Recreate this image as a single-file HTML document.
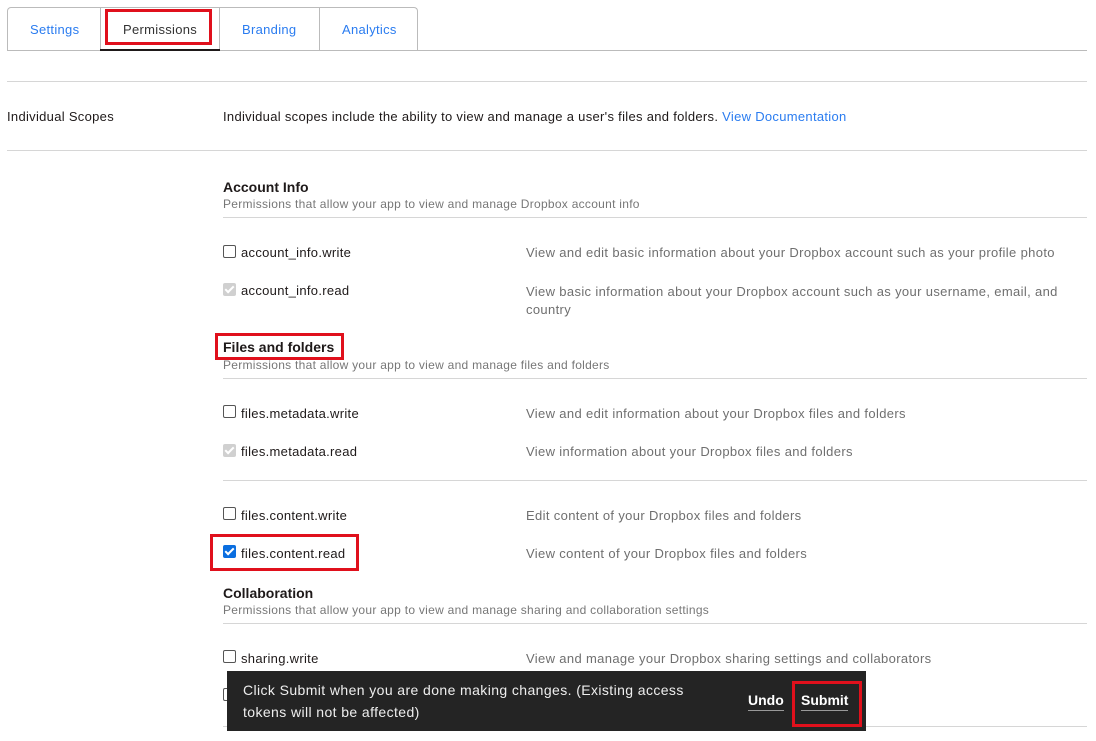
<!DOCTYPE html>
<html><head><style>
body{margin:0;width:1096px;height:741px;background:#fff;font-family:"Liberation Sans",sans-serif;position:relative;overflow:hidden;color:#1e1919}
.a{position:absolute;white-space:nowrap}
.l{position:absolute;height:1px;background:#d6d6d6}
.t{font-size:13px;color:#2a7cf0;letter-spacing:.3px}
.h{font-size:14px;font-weight:bold;color:#1e1919}
.s{font-size:12px;color:#777;letter-spacing:.28px}
.n{font-size:13px;color:#1e1919;letter-spacing:.3px}
.d{font-size:13px;color:#6f6f6f;letter-spacing:.35px}
.cb{position:absolute;width:11px;height:11px;border:1px solid #555;border-radius:2px;background:#fff}
.cg{position:absolute;width:13px;height:13px;border-radius:2px;background:#d0d0d0}
.cg:after,.cc:after{content:"";position:absolute;left:4px;top:1px;width:3px;height:7px;border:solid #fff;border-width:0 2px 2px 0;transform:rotate(45deg)}
.cc{position:absolute;width:13px;height:13px;border-radius:2px;background:#0a6ee0}
.r{position:absolute;border:3px solid #e0101c}
</style></head><body>
<div style="position:absolute;left:7px;top:7px;width:409px;height:43px;border:1px solid #bbb;border-bottom:none;border-radius:4px 4px 0 0"></div>
<div class="l" style="left:7px;top:50px;width:1080px;background:#bbb"></div>
<div style="position:absolute;left:100px;top:7px;width:1px;height:43px;background:#bbb"></div>
<div style="position:absolute;left:219px;top:7px;width:1px;height:43px;background:#bbb"></div>
<div style="position:absolute;left:319px;top:7px;width:1px;height:43px;background:#bbb"></div>
<div style="position:absolute;left:100px;top:49px;width:120px;height:2px;background:#1e1919"></div>
<div class="a t" style="left:30px;top:22px">Settings</div>
<div class="a n" style="left:123px;top:22px;color:#333">Permissions</div>
<div class="a t" style="left:242px;top:22px">Branding</div>
<div class="a t" style="left:342px;top:22px">Analytics</div>
<div class="r" style="left:105px;top:9px;width:101px;height:30px"></div>
<div class="l" style="left:7px;top:81px;width:1080px"></div>
<div class="a n" style="left:7px;top:109px">Individual Scopes</div>
<div class="a n" style="left:223px;top:109px">Individual scopes include the ability to view and manage a user's files and folders. <span style="color:#2a7cf0">View Documentation</span></div>
<div class="l" style="left:7px;top:150px;width:1080px"></div>

<div class="a h" style="left:223px;top:179px">Account Info</div>
<div class="a s" style="left:223px;top:197px">Permissions that allow your app to view and manage Dropbox account info</div>
<div class="l" style="left:223px;top:217px;width:864px"></div>
<div class="cb" style="left:223px;top:245px"></div><div class="a n" style="left:241px;top:245px">account_info.write</div>
<div class="a d" style="left:526px;top:245px">View and edit basic information about your Dropbox account such as your profile photo</div>
<div class="cg" style="left:223px;top:283px"></div><div class="a n" style="left:241px;top:283px">account_info.read</div>
<div class="a d" style="left:526px;top:283px;white-space:normal;width:545px;line-height:18px">View basic information about your Dropbox account such as your username, email, and country</div>

<div class="a h" style="left:223px;top:339px">Files and folders</div>
<div class="r" style="left:215px;top:333px;width:123px;height:21px"></div>
<div class="a s" style="left:223px;top:358px">Permissions that allow your app to view and manage files and folders</div>
<div class="l" style="left:223px;top:378px;width:864px"></div>
<div class="cb" style="left:223px;top:405px"></div><div class="a n" style="left:241px;top:406px">files.metadata.write</div>
<div class="a d" style="left:526px;top:406px">View and edit information about your Dropbox files and folders</div>
<div class="cg" style="left:223px;top:444px"></div><div class="a n" style="left:241px;top:444px">files.metadata.read</div>
<div class="a d" style="left:526px;top:444px">View information about your Dropbox files and folders</div>
<div class="l" style="left:223px;top:480px;width:864px"></div>
<div class="cb" style="left:223px;top:507px"></div><div class="a n" style="left:241px;top:508px">files.content.write</div>
<div class="a d" style="left:526px;top:508px">Edit content of your Dropbox files and folders</div>
<div class="cc" style="left:223px;top:545px"></div><div class="a n" style="left:241px;top:546px">files.content.read</div>
<div class="a d" style="left:526px;top:546px">View content of your Dropbox files and folders</div>
<div class="r" style="left:210px;top:534px;width:143px;height:31px"></div>

<div class="a h" style="left:223px;top:585px">Collaboration</div>
<div class="a s" style="left:223px;top:603px">Permissions that allow your app to view and manage sharing and collaboration settings</div>
<div class="l" style="left:223px;top:623px;width:864px"></div>
<div class="cb" style="left:223px;top:650px"></div><div class="a n" style="left:241px;top:651px">sharing.write</div>
<div class="a d" style="left:526px;top:651px">View and manage your Dropbox sharing settings and collaborators</div>
<div class="cb" style="left:223px;top:688px"></div>
<div class="l" style="left:223px;top:726px;width:864px"></div>

<div style="position:absolute;left:227px;top:671px;width:639px;height:60px;background:#242424"></div>
<div class="a" style="left:243px;top:679px;color:#eee;font-size:14px;line-height:22px;letter-spacing:.4px">Click Submit when you are done making changes. (Existing access<br>tokens will not be affected)</div>
<div class="a" style="left:748px;top:692px;color:#fff;font-size:14px;font-weight:bold;border-bottom:1px solid #999;padding-bottom:2px">Undo</div>
<div class="a" style="left:801px;top:692px;color:#fff;font-size:14px;font-weight:bold;border-bottom:1px solid #999;padding-bottom:2px">Submit</div>
<div class="r" style="left:792px;top:681px;width:64px;height:40px"></div>
</body></html>
